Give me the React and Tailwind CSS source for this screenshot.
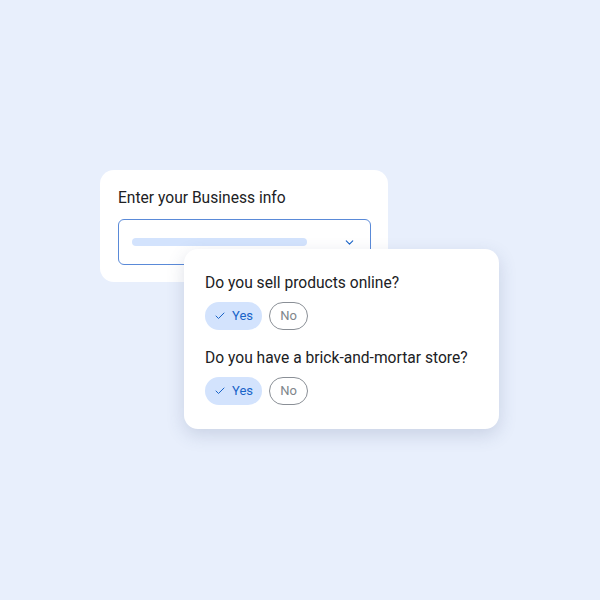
import { Check, ChevronDown } from 'lucide-react';

const questions = [
  'Do you sell products online?',
  'Do you have a brick-and-mortar store?',
];

const YesNo = () => (
  <div className="flex gap-[7px] mt-[8px]">
    <span className="flex items-center gap-[6px] h-[28px] pl-[9px] pr-[9px] rounded-full bg-[#d3e3fd] text-[#1a64c8] text-[13px]">
      <Check size={12} strokeWidth={2} />
      Yes
    </span>
    <span className="flex items-center justify-center h-[28px] w-[39px] rounded-full border border-[#8a8f96] text-[#80868b] text-[13px]">
      No
    </span>
  </div>
);

export default function App() {
  return (
    <div
      className="w-[600px] h-[600px] bg-[#e8effc] pt-[170px] overflow-hidden"
      style={{ fontFamily: 'Roboto, "Liberation Sans", sans-serif' }}
    >
      {/* business info card */}
      <div className="ml-[100px] w-[288px] h-[112px] rounded-[14px] bg-white pt-[17px] px-[18px]">
        <div className="text-[15.6px] leading-[22px] text-[#202124]">Enter your Business info</div>
        <div className="mt-[10px] h-[46px] w-[253px] rounded-[6px] border border-[#5a8ad8] flex items-center pl-[13px] pr-[14px]">
          <span className="h-[8px] w-[175px] rounded-full bg-[#d3e3fd]" />
          <ChevronDown size={13} strokeWidth={2} className="ml-auto text-[#1a64c8]" />
        </div>
      </div>

      {/* questions card */}
      <div className="relative -mt-[33px] ml-[184px] w-[315px] h-[180px] rounded-[14px] bg-white shadow-[0_6px_18px_rgba(60,80,120,0.18)] pt-[23px] px-[21px]">
        {questions.map((q, i) => (
          <div key={q} className={i ? 'mt-[17px]' : ''}>
            <div className="text-[15.6px] leading-[22px] text-[#202124]">{q}</div>
            <YesNo />
          </div>
        ))}
      </div>
    </div>
  );
}
